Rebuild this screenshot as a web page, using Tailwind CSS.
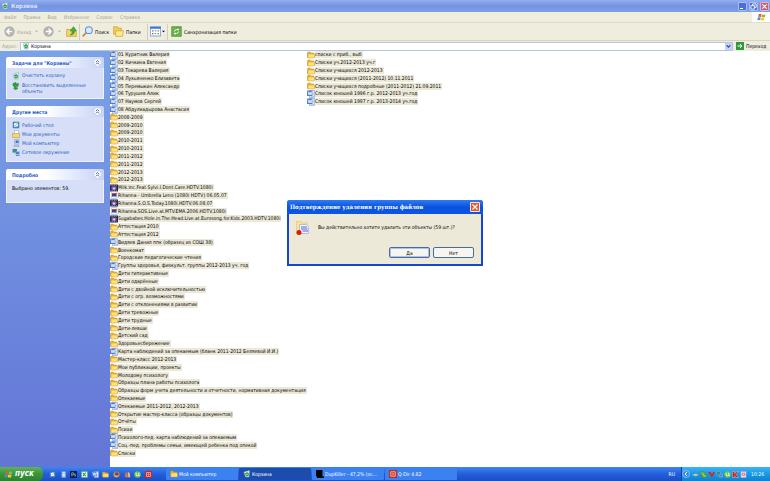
<!DOCTYPE html>
<html lang="ru">
<head>
    <meta charset="UTF-8">
    <meta name="viewport" content="width=device-width, initial-scale=1.0">
    <title>Корзина</title>
    <script src="https://cdn.jsdelivr.net/npm/@tailwindcss/browser@4"></script>
</head>
<body class="h-screen flex flex-col overflow-hidden bg-white text-black text-[5px] leading-[8px] font-['DejaVu_Sans_Condensed','DejaVu_Sans',sans-serif] whitespace-nowrap">

    <!-- Icon set -->
    <svg class="hidden">
        <symbol id="folder" viewBox="0 0 16 16">
            <path d="M1 4q0-2 2-2h3l2 2h5q1 0 1 1v8H1z" fill="#e9b83a" stroke="#b98a1e" />
            <path d="M2 6h12q1 0 1 1v6q0 1-1 1H3q-1 0-1-1z" fill="#ffe07a" stroke="#c99a26" />
        </symbol>
        <symbol id="word" viewBox="0 0 16 16">
            <path d="M5 1h10v14H5z" fill="#fff" stroke="#5a82c4" />
            <path d="M12 4h2M12 7h2M12 10h2M7 13h7" stroke="#6f94d2" />
            <path d="M0 1h11v11H0z" fill="#4f7fcb" />
            <path d="M2 3l2 7 2-6 2 6 2-7" fill="none" stroke="#fff" stroke-width="1.500" />
        </symbol>
        <symbol id="video" viewBox="0 0 16 16">
            <path d="M0 1h16v14H0z" fill="#2b2348" />
            <path d="M1 3h14M1 13h14" stroke="#ddd" stroke-dasharray="2 1.500" />
            <path d="M3 5h10v6H3z" fill="#8273b8" />
            <path d="M5 11l3-5 3 5z" fill="#e8dcf4" />
        </symbol>
        <symbol id="clip" viewBox="0 0 16 16">
            <path d="M3 1h11v14H3z" fill="#f3f3fa" stroke="#9a9aae" />
            <path d="M4 4h9v7H4z" fill="#34458f" />
            <path d="M4 4h9v2H4z" fill="#c7503b" />
        </symbol>
        <symbol id="bin" viewBox="0 0 16 16">
            <path d="M2 4l11-3-1 13H5z" fill="#e4f0f2" stroke="#8ba5b5" />
            <path d="M4 7l4-3 4 3-1 5-5 1z" fill="#2fa64b" />
            <path d="M7 8h2v2H7z" fill="#d9f4dc" />
        </symbol>
        <symbol id="chev" viewBox="0 0 16 16">
            <circle cx="8" cy="8" r="7" fill="#fff" stroke="#aab8dc" />
            <path d="M5 7.500l3-3 3 3M5 11.500l3-3 3 3" fill="none" stroke="#2d4a9c" stroke-width="1.500" />
        </symbol>
        <symbol id="flag" viewBox="0 0 16 16">
            <path d="M3 2q3-1 5 0L7 7Q4 6 2 7z" fill="#f0592b" />
            <path d="M9 2.500q3 1 6 0L14 7q-3 1-6 0z" fill="#7cc142" />
            <path d="M1.500 8q3-1 5 0l-1 5q-3-1-5 0z" fill="#3f8ff0" />
            <path d="M7.500 8q3 1 6 0l-1 5q-3 1-6 0z" fill="#fcc52c" />
        </symbol>
        <symbol id="pc" viewBox="0 0 16 16">
            <path d="M5 1h9v9H5z" fill="#dce5f2" stroke="#8797b5" />
            <path d="M7 3h6v5H7z" fill="#2f7ad6" />
            <path d="M4 12h10v3H4z" fill="#c4cede" stroke="#8797b5" />
        </symbol>
        <symbol id="net" viewBox="0 0 16 16">
            <path d="M1 2h9v7H1z" fill="#245cb8" stroke="#b8c6dc" />
            <path d="M7 7h8v6H7z" fill="#3d86dc" stroke="#b8c6dc" />
            <circle cx="5" cy="6" r="3" fill="#37a25c" />
            <path d="M8 15h7" stroke="#7a8aa6" stroke-width="2" />
        </symbol>
        <symbol id="desk" viewBox="0 0 16 16">
            <path d="M2 2h12v12H2z" fill="#4c94d8" stroke="#3a6ea6" />
            <path d="M4 5l7-2 1 7-7 2z" fill="#fff" />
            <path d="M6 10l6-7" stroke="#d68b2c" stroke-width="1.500" />
        </symbol>
        <symbol id="docs" viewBox="0 0 16 16">
            <path d="M5 1h8v9H5z" fill="#fff" stroke="#8d9ab0" />
            <path d="M1 7h14v8H1z" fill="#f6d773" stroke="#b98f2a" />
        </symbol>
        <symbol id="restore" viewBox="0 0 16 16">
            <path d="M2 3l6-2v3l5-1-1 6-4-1v3l4 1-5 4-4-4 2-1V8H2z" fill="#2da836" stroke="#16761f" />
        </symbol>
        <symbol id="adobe" viewBox="0 0 16 16">
            <path d="M0 0h16v16H0z" fill="#0c1c4a" />
            <path d="M4 12V4h3q2 0 2 2.500T7 9H4M13 7q-3-1-3 1t3 2-3 2" fill="none" stroke="#a8cdf8" stroke-width="1.500" />
        </symbol>
        <symbol id="excel" viewBox="0 0 16 16">
            <path d="M1 1h14v14H1z" fill="#eaf6ea" stroke="#3c9a45" />
            <path d="M4 4l7 8M11 4l-7 8" stroke="#2c9038" stroke-width="2.500" />
        </symbol>
        <symbol id="firefox" viewBox="0 0 16 16">
            <circle cx="8" cy="8" r="7" fill="#ee7a1c" />
            <circle cx="8.500" cy="7" r="4" fill="#2b58b0" />
            <path d="M2 4q0 7 6 7 3 0 5-2-1 5-6 5-6-1-5-10z" fill="#fbb034" />
        </symbol>
        <symbol id="fox" viewBox="0 0 16 16">
            <path d="M2 14Q1 3 7 2l1 12z" fill="#d8742c" />
            <path d="M14 14Q15 3 9 2L8 14z" fill="#f2b378" />
        </symbol>
        <symbol id="utorrent" viewBox="0 0 16 16">
            <circle cx="8" cy="8" r="7.500" fill="#6fc04a" />
            <path d="M5 4v5q0 2 3 2t3-2V4M11 9q0 2 2 2" fill="none" stroke="#fff" stroke-width="2" />
        </symbol>
        <symbol id="qdir" viewBox="0 0 16 16">
            <path d="M0 0h16v16H0z" fill="#c8281c" />
            <path d="M3.500 3.500h9v9h-9z" fill="none" stroke="#ffd8d0" stroke-width="1.500" />
            <path d="M8 5v6M5 8h6" stroke="#ffd8d0" />
        </symbol>
        <symbol id="black" viewBox="0 0 16 16">
            <path d="M0 0h13v13h3v3H2v-3H0z" fill="#000" />
        </symbol>
        <symbol id="disk" viewBox="0 0 16 16">
            <path d="M0 9q8-7 16 0-8 6-16 0z" fill="#c3cdd0" stroke="#5f7480" />
        </symbol>
        <symbol id="leaf" viewBox="0 0 16 16">
            <path d="M1 2h10v6h4v6H5V9H1z" fill="#7cb83a" stroke="#3f7e26" />
            <path d="M6 7l6 6" stroke="#e9d35a" stroke-width="2" />
        </symbol>
        <symbol id="redv" viewBox="0 0 16 16">
            <path d="M0 2h6l3 6 3-6h4L9 15z" fill="#e02414" />
        </symbol>
        <symbol id="kav" viewBox="0 0 16 16">
            <path d="M1 1h5v5l5-5h4L9 8l6 7H9L6 11v4H1z" fill="#d41c14" stroke="#fff" stroke-width=".8" />
        </symbol>
        <symbol id="note" viewBox="0 0 16 16">
            <path d="M2 1h12v14H2z" fill="#f4e4ec" stroke="#b890b0" />
            <path d="M5 5h6v5H5z" fill="none" stroke="#c2407a" stroke-width="1.500" />
        </symbol>
        <symbol id="calc" viewBox="0 0 16 16">
            <path d="M4 1h9v14H4z" fill="#a8c4ee" stroke="#6d93d0" />
            <path d="M6 4h5M6 8h5M6 11h5" stroke="#fff" stroke-width="1.500" />
        </symbol>
        <symbol id="down" viewBox="0 0 8 8">
            <path d="M0 2h8L4 6z" fill="currentColor" />
        </symbol>
    </svg>

    <!-- Title bar -->
    <header class="h-3 shrink-0 flex items-center gap-[2px] pl-px pr-px bg-linear-to-b from-[#93aff0] via-[#7492e0] to-[#7f9fe8]">
        <svg class="size-2"><use href="#bin" /></svg>
        <h1 class="grow text-[6px] font-bold text-[#dbe5fb]">Корзина</h1>
        <div class="flex gap-[2px]">
            <button aria-label="Свернуть" class="size-[9px] rounded-[1px] border border-[#a9bdf2] bg-[#4a6fdc] flex items-end p-px"><span class="w-[3px] h-px bg-white"></span></button>
            <button aria-label="Восстановить" class="size-[9px] rounded-[1px] border border-[#a9bdf2] bg-[#4a6fdc] flex items-center justify-center">
                <svg class="size-[7px]" viewBox="0 0 8 8"><path d="M3 3V1h4v4H5M1 3h4v4H1z" fill="none" stroke="#fff" /></svg>
            </button>
            <button aria-label="Закрыть" class="size-[9px] rounded-[1px] border border-[#d9b5cf] bg-[#c5607a] flex items-center justify-center">
                <svg class="size-[7px]" viewBox="0 0 8 8"><path d="M1.500 1.500l5 5M6.500 1.500l-5 5" stroke="#fff" stroke-width="1.200" /></svg>
            </button>
        </div>
    </header>

    <!-- Menu -->
    <nav class="h-[11px] shrink-0 flex items-stretch bg-[#efedde] border-b border-[#dedbca] text-[#a5a395]">
        <div class="grow flex items-center gap-[7px] pl-1">
            <button>Файл</button>
            <button>Правка</button>
            <button>Вид</button>
            <button>Избранное</button>
            <button>Сервис</button>
            <button>Справка</button>
        </div>
        <div class="w-[18px] bg-white flex items-center justify-center"><svg class="size-[9px]"><use href="#flag" /></svg></div>
    </nav>

    <!-- Toolbar -->
    <div class="h-[18px] shrink-0 flex items-center bg-[#efedde] border-b border-[#d8d4c0]">
        <button class="flex items-center gap-[2px] pl-1 w-[43px] text-[#aaa89a]">
            <svg class="size-[11px]" viewBox="0 0 16 16"><circle cx="8" cy="8" r="7.500" fill="#b3b3af" /><path d="M12 8H4M8 4L4 8l4 4" fill="none" stroke="#fff" stroke-width="2" /></svg>
            Назад <svg class="size-[3px] ml-[2px]"><use href="#down" /></svg>
        </button>
        <button aria-label="Вперед" class="flex items-center gap-1 w-[23px] text-[#aaa89a]">
            <svg class="size-[11px]" viewBox="0 0 16 16"><circle cx="8" cy="8" r="7.500" fill="#b3b3af" /><path d="M4 8h8M8 4l4 4-4 4" fill="none" stroke="#fff" stroke-width="2" /></svg>
            <svg class="size-[3px]"><use href="#down" /></svg>
        </button>
        <button aria-label="Вверх" class="w-[13px]">
            <svg class="size-[11px]" viewBox="0 0 16 16"><path d="M1 5h6l1 2h7v8H1z" fill="#f5d662" stroke="#c49a2c" /><path d="M6 13q4-1 3-6H6l5-6 4 6h-3q1 6-6 6z" fill="#3db33c" stroke="#1d7c22" stroke-width=".8" /></svg>
        </button>
        <span class="h-4 border-l border-[#d2cebb] mr-[2px]"></span>
        <button class="flex items-center gap-[2px] w-[29px]">
            <svg class="size-[11px] shrink-0" viewBox="0 0 16 16"><path d="M1 15l6-6" stroke="#c78a4c" stroke-width="2.500" /><circle cx="10" cy="6" r="5" fill="#d4ecfc" stroke="#5d93d8" stroke-width="1.500" /></svg>
            Поиск
        </button>
        <button class="flex items-center gap-[2px] w-[32px] ml-[2px]">
            <svg class="size-[11px] shrink-0" viewBox="0 0 16 16"><path d="M1 1h5l1 2h5v9H1z" fill="#f3cf57" stroke="#c99d2c" /><path d="M4 7h11l-1 8H4z" fill="#ffe995" stroke="#c99d2c" /></svg>
            Папки
        </button>
        <span class="h-4 border-l border-[#d2cebb] mx-[2px]"></span>
        <button aria-label="Вид" class="flex items-center gap-px w-[17px]">
            <svg class="size-[11px] shrink-0" viewBox="0 0 16 16"><path d="M.5 1.500h15v13H.5z" fill="#fff" stroke="#4b7ccf" /><path d="M0 1h16v3H0z" fill="#3f75d6" /><path d="M3 7h2M3 11h2" stroke="#3c64c0" stroke-width="2" /><path d="M7 7h2M7 11h2" stroke="#e0703a" stroke-width="2" /><path d="M11 7h2M11 11h2" stroke="#3fa048" stroke-width="2" /></svg>
            <svg class="size-[3px]"><use href="#down" /></svg>
        </button>
        <span class="h-4 border-l border-[#d2cebb] mr-[3px]"></span>
        <button class="flex items-center gap-[2px]">
            <svg class="size-[11px]" viewBox="0 0 16 16"><path d="M1 1h14v14H1z" fill="#6cb63f" stroke="#4c8b2c" /><path d="M4 9q0-5 5-5l-1-2 5 3-4 3V6Q6 6 6 9zM12 7q0 5-5 5l1 2-5-3 4-3v2q3 0 3-3z" fill="#fff" stroke="#2f7a23" stroke-width=".6" /></svg>
            Синхронизация папки
        </button>
    </div>

    <!-- Address bar -->
    <form class="h-[10px] shrink-0 flex items-center bg-[#efedde]">
        <label for="address" class="w-[20px] pl-[2px] text-[#a5a395]">Адрес:</label>
        <div class="grow h-[9px] flex items-center bg-white border border-[#b4c5de]">
            <svg class="size-[8px] ml-px"><use href="#bin" /></svg>
            <input id="address" value="Корзина" class="grow pl-px h-[7px] outline-none">
            <button type="button" aria-label="Список адресов" class="w-[7px] h-[7px] bg-[#c3d3fb] flex items-center justify-center">
                <svg class="size-[5px]" viewBox="0 0 8 8"><path d="M1 2l3 3 3-3" fill="none" stroke="#3f5590" stroke-width="2" /></svg>
            </button>
        </div>
        <button type="button" class="flex items-center gap-[2px] pl-[3px] w-[37px]">
            <svg class="size-[8px] shrink-0" viewBox="0 0 16 16"><path d="M0 0h16v16H0z" fill="#2f9a3a" /><path d="M3 8h9M8 4l4 4-4 4" fill="none" stroke="#fff" stroke-width="2" /></svg>
            Переход
        </button>
    </form>

    <main class="grow min-h-0 flex">
        <!-- Task pane -->
        <aside class="w-[110px] shrink-0 flex flex-col gap-[7px] px-[6px] pt-[6px] bg-linear-to-b from-[#7ba2e7] to-[#6375d6] text-[#2c5cc5]">
            <section>
                <h2 class="h-[11px] flex items-center justify-between pl-[6px] pr-[2px] rounded-t-[2px] bg-linear-to-r from-white from-40% to-[#c6d3f7] font-bold">Задачи для "Корзины"<svg class="size-[9px]"><use href="#chev" /></svg></h2>
                <ul class="bg-[#d6dff7] border border-t-0 border-white/60 px-[5px] pt-1 flex flex-col gap-[2px] h-[31px] leading-[6px]">
                    <li><a href="#" class="flex gap-[2px]"><svg class="size-[8px] shrink-0"><use href="#bin" /></svg>Очистить корзину</a></li>
                    <li><a href="#" class="flex gap-[2px]"><svg class="size-[8px] shrink-0"><use href="#restore" /></svg><span>Восстановить выделенные<br>объекты</span></a></li>
                </ul>
            </section>
            <section>
                <h2 class="h-[11px] flex items-center justify-between pl-[6px] pr-[2px] rounded-t-[2px] bg-linear-to-r from-white from-40% to-[#c6d3f7] font-bold">Другие места<svg class="size-[9px]"><use href="#chev" /></svg></h2>
                <ul class="bg-[#d6dff7] border border-t-0 border-white/60 px-[5px] pt-1 flex flex-col gap-px h-[45px]">
                    <li><a href="#" class="flex gap-[2px]"><svg class="size-[8px]"><use href="#desk" /></svg>Рабочий стол</a></li>
                    <li><a href="#" class="flex gap-[2px]"><svg class="size-[8px]"><use href="#docs" /></svg>Мои документы</a></li>
                    <li><a href="#" class="flex gap-[2px]"><svg class="size-[8px]"><use href="#pc" /></svg>Мой компьютер</a></li>
                    <li><a href="#" class="flex gap-[2px]"><svg class="size-[8px]"><use href="#net" /></svg>Сетевое окружение</a></li>
                </ul>
            </section>
            <section>
                <h2 class="h-[11px] flex items-center justify-between pl-[6px] pr-[2px] rounded-t-[2px] bg-linear-to-r from-white from-40% to-[#c6d3f7] font-bold">Подробно<svg class="size-[9px]"><use href="#chev" /></svg></h2>
                <p class="bg-[#d6dff7] border border-t-0 border-white/60 px-[5px] pt-1 h-[23px] text-black">Выбрано элементов: 59.</p>
            </section>
        </aside>

        <!-- Files -->
        <ul id="files" class="grow grid grid-flow-col grid-rows-[repeat(52,minmax(0,1fr))] grid-cols-[197px_1fr] pb-[10px]"></ul>
    </main>

    <!-- Taskbar -->
    <footer class="h-[14px] shrink-0 flex items-stretch text-white bg-linear-to-b from-[#3f86f0] via-[#245edb] to-[#1c4fc0]">
        <button class="w-[43px] flex items-center gap-[2px] pl-1 rounded-r-[5px] bg-linear-to-b from-[#5cb35a] via-[#3a953a] to-[#2f7f30] text-[8px] font-bold italic font-['DejaVu_Sans_Condensed',sans-serif]">
            <svg class="size-[9px]"><use href="#flag" /></svg>пуск
        </button>
        <div id="quick" class="w-[123px] flex items-center justify-between pl-[6px] pr-[14px]"></div>
        <div id="tasks" class="grow flex items-stretch gap-px"></div>
        <button class="px-[6px]">RU</button>
        <div class="flex items-center pr-[6px] bg-linear-to-b from-[#3cb4f4] via-[#159ae8] to-[#1180cc] border-l border-[#1042af]">
            <svg class="size-[8px] mr-[2px]" viewBox="0 0 16 16"><circle cx="8" cy="8" r="7" fill="#3a86ee" stroke="#cfe4ff" /><path d="M10 4L6 8l4 4" fill="none" stroke="#fff" stroke-width="2" /></svg>
            <div id="tray" class="flex items-center gap-px pr-1"></div>
            <time>10:26</time>
        </div>
    </footer>

    <!-- Delete confirmation -->
    <div role="dialog" aria-labelledby="dialog-title" class="absolute left-[287px] top-[200px] w-[196px] h-[66px] flex flex-col rounded-t-[3px] bg-[#ece9d8] border-2 border-t-0 border-[#1447d4]">
        <div class="h-[14px] -mx-[2px] px-[3px] flex items-center justify-between rounded-t-[3px] bg-linear-to-b from-[#2f7bf5] via-[#0a53dd] to-[#0b56e6] text-white">
            <h2 id="dialog-title" class="text-[6px] font-bold font-['DejaVu_Serif_Condensed','DejaVu_Serif',serif]">Подтверждение удаления группы файлов</h2>
            <button aria-label="Закрыть" class="size-[10px] rounded-[1px] border border-white/80 bg-[#dd5a36] flex items-center justify-center">
                <svg class="size-2" viewBox="0 0 8 8"><path d="M1.500 1.500l5 5M6.500 1.500l-5 5" stroke="#fff" stroke-width="1.200" /></svg>
            </button>
        </div>
        <div class="grow flex items-start gap-[7px] pl-[6px] pt-[6px]">
            <svg class="size-4" viewBox="0 0 32 32">
                <path d="M3 3h9l2 3h10v21H3z" fill="#f8e69a" stroke="#d8bf5c" />
                <path d="M9 9h14l4 4v14H9z" fill="#f2f4ff" stroke="#8590d0" />
                <path d="M12 14h12M12 18h13M15 22h11" stroke="#5568c8" stroke-width="2" />
                <circle cx="8" cy="25" r="5" fill="#e8150c" />
            </svg>
            <p class="pt-[3px]">Вы действительно хотите удалить эти объекты (59 шт.)?</p>
        </div>
        <div class="flex justify-end gap-[3px] pr-[7px] pb-[6px]">
            <button class="w-[41px] h-[11px] leading-[8px] rounded-[2px] border border-[#4a6c98] bg-[#f6f5f0] ring-1 ring-inset ring-[#a9c3f0]">Да</button>
            <button class="w-[41px] h-[11px] leading-[8px] rounded-[2px] border border-[#4a6c98] bg-[#f6f5f0]">Нет</button>
        </div>
    </div>

    <script>
        const files = [
            ["word", "01 Куратник Валерия"],
            ["word", "02 Кичкина Евгения"],
            ["word", "03 Токарева Валерия"],
            ["word", "04 Лукьяненко Елизавета"],
            ["word", "05 Перемыкин Александр"],
            ["word", "06 Турушев Алик"],
            ["word", "07 Наумов Сергей"],
            ["word", "08 Абдулкадырова Анастасия"],
            ["folder", "2008-2009"],
            ["folder", "2009-2010"],
            ["folder", "2009-2010"],
            ["folder", "2010-2011"],
            ["folder", "2010-2011"],
            ["folder", "2011-2012"],
            ["folder", "2011-2012"],
            ["folder", "2012-2013"],
            ["folder", "2012-2013"],
            ["video", "Milk.Inc.Feat.Sylvi.I.Dont.Care.HDTV.1080i"],
            ["clip", "Rihanna - Umbrella Leno (1080i HDTV) 06.05.07"],
            ["video", "Rihanna.S.O.S.Today.1080i.HDTV.06.08.07"],
            ["clip", "Rihanna.SOS.Live.at.MTV.EMA.2006.HDTV.1080i"],
            ["video", "Sugababes.Hole.in.The.Head.Live.at.Eurosong.for.Kids.2003.HDTV.1080i"],
            ["folder", "Аттестация 2010"],
            ["folder", "Аттестация 2012"],
            ["word", "Видяев Данил ппк (образец из СОШ 38)"],
            ["folder", "Военкомат"],
            ["folder", "Городские педагогические чтения"],
            ["word", "Группы здоровья, физкульт. группы 2012-2013 уч. год"],
            ["folder", "Дети гиперактивные"],
            ["folder", "Дети одарённые"],
            ["folder", "Дети с двойной исключительностью"],
            ["folder", "Дети с огр. возможностями"],
            ["folder", "Дети с отклонениями в развитии"],
            ["folder", "Дети тревожные"],
            ["folder", "Дети трудные"],
            ["folder", "Дети-левши"],
            ["folder", "Детский сад"],
            ["folder", "Здоровьесбережение"],
            ["word", "Карта наблюдений за опекаемым (бланк 2011-2012 Беляевой И.И.)"],
            ["folder", "Мастер-класс 2012-2013"],
            ["folder", "Мои публикации, проекты"],
            ["folder", "Молодому психологу"],
            ["folder", "Образцы плана работы психолога"],
            ["folder", "Образцы форм учета деятельности и отчетности, нормативная документация"],
            ["folder", "Опекаемые"],
            ["word", "Опекаемые 2011-2012, 2012-2013"],
            ["folder", "Открытие мастер-класса (образцы документов)"],
            ["folder", "Отчёты"],
            ["folder", "Психи"],
            ["word", "Психолого-пед. карта наблюдений за опекаемым"],
            ["word", "Соц.-пед. проблемы семьи, имеющей ребенка под опекой"],
            ["folder", "Списки"],
            ["folder", "списки с приб., выб"],
            ["folder", "Списки уч.2012-2013 уч.г"],
            ["folder", "Списки учащихся 2012-2013"],
            ["folder", "Списки учащихся (2011-2012) 10.11.2011"],
            ["folder", "Списки учащихся подробные (2011-2012) 21.09.2011"],
            ["word", "Список юношей 1996 г.р. 2012-2013 уч.год"],
            ["word", "Список юношей 1997 г.р. 2013-2014 уч.год"]
        ];
        document.getElementById("files").innerHTML = files.map(([icon, name]) =>
            `<li class="flex items-center"><svg class="size-[8px] shrink-0"><use href="#${icon}" /></svg><span class="bg-[#ece9d8] h-[7px] leading-[7px] pr-px">${name}</span></li>`
        ).join("");

        const quick = [
            ["desk", "Рабочий стол"], ["calc", "Калькулятор"], ["adobe", "Photoshop"], ["excel", "Excel"], ["word", "Word"],
            ["folder", "Проводник"], ["firefox", "Firefox"], ["fox", "Галерея"], ["utorrent", "Торрент"], ["qdir", "Q-Dir"]
        ];
        document.getElementById("quick").innerHTML = quick.map(([icon, name]) =>
            `<button aria-label="${name}" class="w-[7px] shrink-0"><svg class="size-[7px]"><use href="#${icon}" /></svg></button>`
        ).join("");

        const tasks = [
            ["folder", "Мой компьютер"],
            ["bin", "Корзина", true],
            ["black", "DupKiller - 47,2% (ос..."],
            ["qdir", "Q-Dir 4.82"]
        ];
        document.getElementById("tasks").innerHTML = tasks.map(([icon, name, active]) =>
            `<button class="w-[72px] my-px flex items-center gap-px pl-1 rounded-[1px] ${active ? "bg-[#1c4cae]" : "bg-[#3c81f0]"}"><svg class="size-[8px] shrink-0"><use href="#${icon}" /></svg>${name}</button>`
        ).join("");

        const tray = ["disk", "leaf", "redv", "net", "utorrent", "kav", "note"];
        document.getElementById("tray").innerHTML = tray.map(icon =>
            `<svg class="size-[7px]"><use href="#${icon}" /></svg>`
        ).join("");
    </script>

</body>
</html>
